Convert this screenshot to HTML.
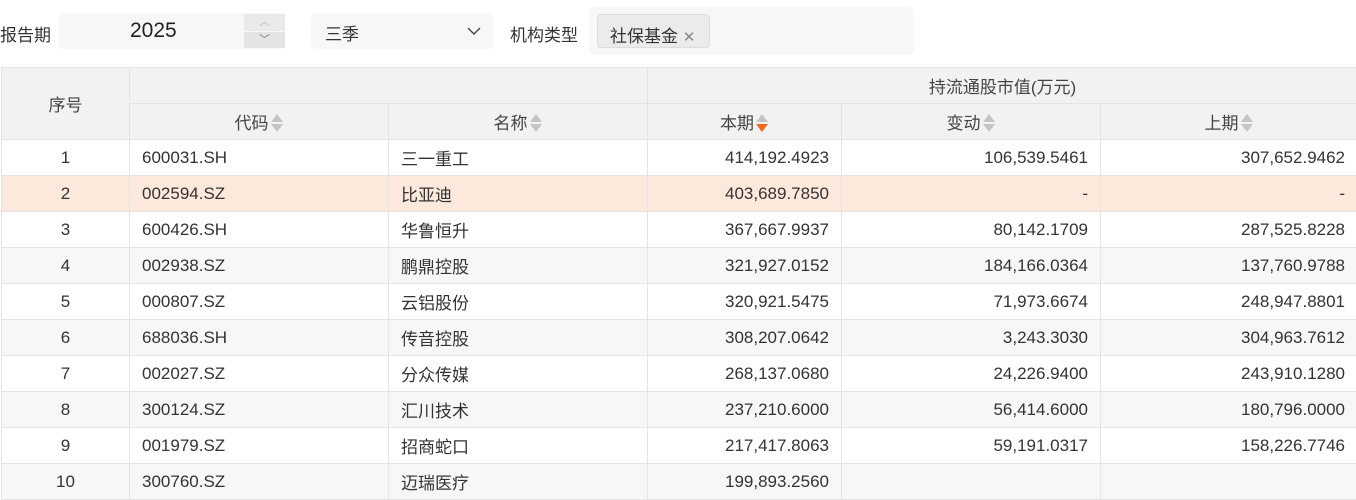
<!DOCTYPE html>
<html><head><meta charset="utf-8"><style>
*{box-sizing:border-box;margin:0;padding:0}
body{width:1356px;height:477px;overflow:hidden;background:#fff;font-family:"Liberation Sans","Noto Sans CJK SC",sans-serif;font-size:17px;color:#333;position:relative}
.abs{position:absolute}
table{position:absolute;left:1px;top:67px;border-collapse:collapse;table-layout:fixed;width:1356px}
td,th{border:1px solid #e4e4e4;height:36px;font-weight:normal;padding:0 12px;white-space:nowrap;overflow:hidden}
th{background:#f2f2f2;text-align:center;color:#444}
td.c{text-align:center}td.r{text-align:right}
tr.g td{background:#f7f7f7}
tr.h td{background:#fde8dc}
.s{display:inline-block;width:14px;height:18px;vertical-align:-3px;margin-left:1px;position:relative}
.s:before{content:"";position:absolute;left:1px;top:0;border:6px solid transparent;border-bottom:8px solid #c4c4c4;border-top:0}
.s:after{content:"";position:absolute;left:1px;top:10px;border:6px solid transparent;border-top:8px solid #c4c4c4;border-bottom:0}
.s.d:after{border-top-color:#f06a1c}
</style></head><body>
<div class="abs" style="left:0;top:21px;font-size:17px">报告期</div>
<div class="abs" style="left:59px;top:13px;width:226px;height:36px;background:#f7f7f7;border-radius:5px"></div>
<div class="abs" style="left:130px;top:19px;font-size:21px;color:#222">2025</div>
<div class="abs" style="left:244px;top:14px;width:41px;height:17px;background:#eaeaea;color:#bbb;font-size:11px;text-align:center;line-height:17px">︿</div>
<div class="abs" style="left:244px;top:32px;width:41px;height:16px;background:#e4e4e4;color:#777;font-size:11px;text-align:center;line-height:16px">﹀</div>
<div class="abs" style="left:311px;top:13px;width:182px;height:36px;background:#f7f7f7;border-radius:6px"></div>
<div class="abs" style="left:325px;top:20px">三季</div>
<svg class="abs" style="left:467px;top:27px" width="14" height="9"><path d="M1 1l6 6 6-6" fill="none" stroke="#444" stroke-width="1.4"/></svg>
<div class="abs" style="left:510px;top:21px">机构类型</div>
<div class="abs" style="left:589px;top:7px;width:325px;height:48px;background:#f7f7f7;border-radius:6px"></div>
<div class="abs" style="left:597px;top:14px;width:113px;height:34px;background:#ebebeb;border:1px solid #ddd;border-radius:4px;padding:7px 0 0 12px">社保基金 <span style="color:#888;font-size:15px">✕</span></div>
<table>
<colgroup><col style="width:128px"><col style="width:259px"><col style="width:259px"><col style="width:194px"><col style="width:259px"><col style="width:257px"></colgroup>
<tr><th rowspan="2">序号</th><th colspan="2"></th><th colspan="3">持流通股市值(万元)</th></tr>
<tr><th>代码<span class="s"></span></th><th>名称<span class="s"></span></th><th>本期<span class="s d"></span></th><th>变动<span class="s"></span></th><th>上期<span class="s"></span></th></tr>
<tr><td class="c">1</td><td>600031.SH</td><td>三一重工</td><td class="r">414,192.4923</td><td class="r">106,539.5461</td><td class="r">307,652.9462</td></tr>
<tr class="h"><td class="c">2</td><td>002594.SZ</td><td>比亚迪</td><td class="r">403,689.7850</td><td class="r">-</td><td class="r">-</td></tr>
<tr><td class="c">3</td><td>600426.SH</td><td>华鲁恒升</td><td class="r">367,667.9937</td><td class="r">80,142.1709</td><td class="r">287,525.8228</td></tr>
<tr class="g"><td class="c">4</td><td>002938.SZ</td><td>鹏鼎控股</td><td class="r">321,927.0152</td><td class="r">184,166.0364</td><td class="r">137,760.9788</td></tr>
<tr><td class="c">5</td><td>000807.SZ</td><td>云铝股份</td><td class="r">320,921.5475</td><td class="r">71,973.6674</td><td class="r">248,947.8801</td></tr>
<tr class="g"><td class="c">6</td><td>688036.SH</td><td>传音控股</td><td class="r">308,207.0642</td><td class="r">3,243.3030</td><td class="r">304,963.7612</td></tr>
<tr><td class="c">7</td><td>002027.SZ</td><td>分众传媒</td><td class="r">268,137.0680</td><td class="r">24,226.9400</td><td class="r">243,910.1280</td></tr>
<tr class="g"><td class="c">8</td><td>300124.SZ</td><td>汇川技术</td><td class="r">237,210.6000</td><td class="r">56,414.6000</td><td class="r">180,796.0000</td></tr>
<tr><td class="c">9</td><td>001979.SZ</td><td>招商蛇口</td><td class="r">217,417.8063</td><td class="r">59,191.0317</td><td class="r">158,226.7746</td></tr>
<tr class="g"><td class="c">10</td><td>300760.SZ</td><td>迈瑞医疗</td><td class="r">199,893.2560</td><td class="r"></td><td class="r"></td></tr>
</table>
</body></html>
